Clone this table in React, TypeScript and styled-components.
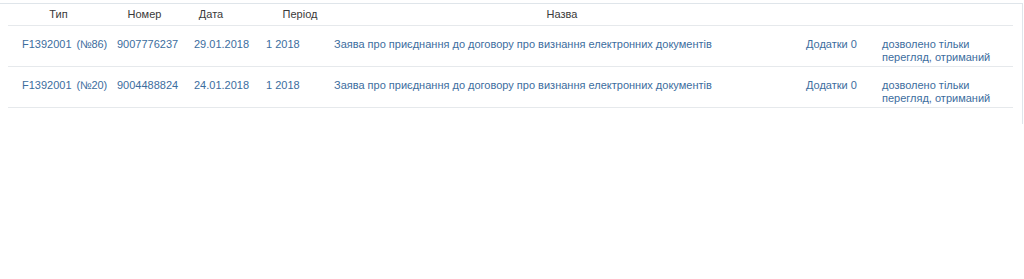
import React from "react";
import styled, { createGlobalStyle } from "styled-components";

const GlobalStyle = createGlobalStyle`
  body {
    margin: 0;
    background: #ffffff;
    font-family: "Liberation Sans", Arial, sans-serif;
  }
`;

type Doc = {
  type: string;
  code: string;
  number: string;
  date: string;
  period: string;
  title: string;
  attachments: string;
  status: string[];
};

const docs: Doc[] = [
  {
    type: "F1392001",
    code: "(№86)",
    number: "9007776237",
    date: "29.01.2018",
    period: "1 2018",
    title: "Заява про приєднання до договору про визнання електронних документів",
    attachments: "Додатки 0",
    status: ["дозволено тільки", "перегляд, отриманий"],
  },
  {
    type: "F1392001",
    code: "(№20)",
    number: "9004488824",
    date: "24.01.2018",
    period: "1 2018",
    title: "Заява про приєднання до договору про визнання електронних документів",
    attachments: "Додатки 0",
    status: ["дозволено тільки", "перегляд, отриманий"],
  },
];

const columns = [
  { title: "Тип", width: 101, shift: 0 },
  { title: "Номер", width: 77, shift: -3 },
  { title: "Дата", width: 72, shift: -11 },
  { title: "Період", width: 68, shift: 8 },
  { title: "Назва", width: 472, shift: 0 },
  { title: "", width: 76, shift: 0 },
  { title: "", width: 139, shift: 0 },
];

const App = () => {
  return (
    <>
      <GlobalStyle />
      <Panel>
        <Table>
          <colgroup>
            {columns.map((c, i) => (
              <col key={i} style={{ width: c.width }} />
            ))}
          </colgroup>
          <thead>
            <tr>
              {columns.map((c, i) => (
                <HeadCell key={i} $shift={c.shift}>
                  {c.title}
                </HeadCell>
              ))}
            </tr>
          </thead>
          <tbody>
            {docs.map((d, i) => (
              <Row key={i}>
                <Cell $pad={14}>
                  <Link>
                    {d.type}
                    <Code>{d.code}</Code>
                  </Link>
                </Cell>
                <Cell>
                  <Link>{d.number}</Link>
                </Cell>
                <Cell>
                  <Link>{d.date}</Link>
                </Cell>
                <Cell>
                  <Link>{d.period}</Link>
                </Cell>
                <Cell>
                  <Link>{d.title}</Link>
                </Cell>
                <Cell>
                  <Link>{d.attachments}</Link>
                </Cell>
                <Cell>
                  <Link>
                    {d.status[0]}
                    <br />
                    {d.status[1]}
                  </Link>
                </Cell>
              </Row>
            ))}
          </tbody>
        </Table>
      </Panel>
    </>
  );
};

export default App;

const Panel = styled.div`
  margin-top: 3px;
  width: 1023px;
  box-sizing: border-box;
  border-top: 1px solid #dfe5ea;
  border-right: 1px solid #dfe5ea;
  padding: 0 9px 16px 8px;
`;

const Table = styled.table`
  width: 1005px;
  table-layout: fixed;
  border-collapse: collapse;
  font-size: 11px;
  line-height: 13px;
`;

const HeadCell = styled.th<{ $shift: number }>`
  padding: 4px 0 4px ${(p) => (p.$shift > 0 ? p.$shift * 2 : 0)}px;
  padding-right: ${(p) => (p.$shift < 0 ? -p.$shift * 2 : 0)}px;
  text-align: center;
  font-weight: normal;
  color: #3a3a3a;
  border-bottom: 1px solid #e6e9ec;
  white-space: nowrap;
`;

const Row = styled.tr`
  border-bottom: 1px solid #e6e9ec;
`;

const Cell = styled.td<{ $pad?: number }>`
  height: 25px;
  padding: 12px 4px 2px ${(p) => p.$pad ?? 8}px;
  vertical-align: top;
  white-space: nowrap;
`;

const Link = styled.span`
  color: #3c6d9e;
  cursor: pointer;
`;

const Code = styled.span`
  margin-left: 5px;
  letter-spacing: -0.2px;
`;
